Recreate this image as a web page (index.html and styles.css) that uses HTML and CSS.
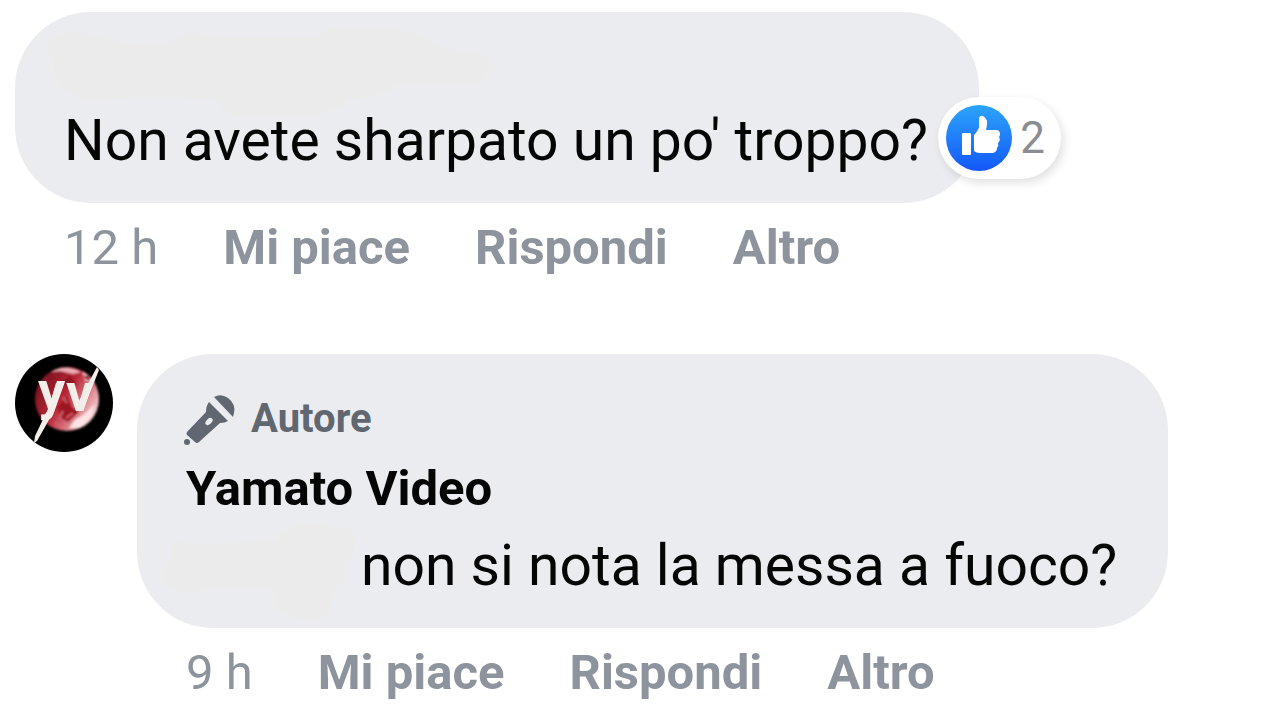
FILE: index.html
```
<!DOCTYPE html>
<html lang="it">
<head>
    <meta charset="utf-8">
    <meta name="viewport" content="width=device-width, initial-scale=1">
    <title>Commenti</title>
    <link rel="stylesheet" href="styles.css">
</head>
<body>
    <main class="comments">
        <article class="comment">
            <div class="bubble">
                <svg class="hidden-name" width="436" height="60" viewBox="0 0 436 60" aria-hidden="true">
                    <path d="M-15 5Q-2 -8 12 -6Q25 -4 38 1Q72 9 108 4Q115 -6 133 -5Q150 2 180 1H254Q263 -12 290 -11Q335 -10 360 0Q370 13 398 13Q422 14 425 27Q425 46 408 47Q365 46 332 48Q316 62 288 61Q270 78 230 80H185Q160 80 152 62Q100 58 35 62Q-10 63 -10 28Q-22 18 -15 5Z"/>
                </svg>
                <p class="text">Non avete sharpato un po' troppo?</p>
                <button type="button" class="reactions" aria-label="2 Mi piace">
                    <svg width="66" height="66" viewBox="0 0 66 66" aria-hidden="true">
                        <defs>
                            <linearGradient id="like" x1="0" y1="0" x2="0" y2="1">
                                <stop offset="0" stop-color="#2ca4fb"/>
                                <stop offset="1" stop-color="#1358f8"/>
                            </linearGradient>
                        </defs>
                        <circle cx="33" cy="33" r="33" fill="url(#like)"/>
                        <path fill="#fff" d="M17 28H24Q25 28 25 29V49Q25 50 24 50H17Q16 50 16 49V29Q16 28 17 28ZM28 30Q34 24 33 19V13Q34 10 37 11Q42 14 41 20L40 25H50Q54 25 54 29Q54 31 53 32Q55 35 52 38Q53 41 51 43Q51 47 47 48H34Q30 48 28 46Z"/>
                    </svg>
                    <span>2</span>
                </button>
            </div>
            <div class="actions">
                <span>12 h</span>
                <button type="button">Mi piace</button>
                <button type="button">Rispondi</button>
                <button type="button">Altro</button>
            </div>
        </article>

        <article class="comment reply">
            <svg class="avatar" viewBox="0 0 98 98" role="img" aria-label="Yamato Video">
                <defs>
                    <linearGradient id="moon" x1="0.05" y1="0.25" x2="0.9" y2="0.8">
                        <stop offset="0" stop-color="#7d1420"/>
                        <stop offset="0.45" stop-color="#b92737"/>
                        <stop offset="0.7" stop-color="#d5707a"/>
                        <stop offset="1" stop-color="#f6d3d5"/>
                    </linearGradient>
                    <filter id="soft" x="-20%" y="-20%" width="140%" height="140%">
                        <feGaussianBlur stdDeviation="1"/>
                    </filter>
                    <clipPath id="round"><circle cx="49" cy="49" r="49"/></clipPath>
                </defs>
                <g clip-path="url(#round)">
                    <rect width="98" height="98" fill="#000"/>
                    <g filter="url(#soft)">
                        <circle cx="52" cy="45" r="32" fill="url(#moon)"/>
                        <path d="M36 18Q50 9 66 18L58 20L45 17ZM67 17Q76 21 80 30L70 27Z" fill="#edabb2"/>
                        <path d="M43 53L52 42L57 53L64 58L53 68L45 63Z" fill="#9c1424"/>
                        <path d="M60 66Q72 60 79 50Q78 66 64 74L54 74Z" fill="#ffe3e4"/>
                        <path d="M46 28L55 22L61 29L54 35ZM32 26L38 21L42 25ZM68 23L74 21L75 27Z" fill="#8c1421"/>
                        <path d="M48 43L52 49M58 59L51 64M48 57L44 65M40 68L46 72" stroke="#d8606b" stroke-width="2"/>
                    </g>
                    <text class="avatar-letters" x="23" y="55">y</text>
                    <text class="avatar-letters" x="51" y="57">v</text>
                    <path d="M41 29H49L39 57L22 87L19 89L20 82L34 53ZM82 13L84 16L70 51L64 57L61 53L69 37Z" fill="#f4eeea"/>
                </g>
            </svg>
            <div class="reply-body">
                <div class="bubble">
                    <div class="badge">
                        <svg width="50" height="50" viewBox="0 1 50 50" aria-hidden="true">
                            <path d="M28 4Q35 0 42 5Q50 11 48 20L47 24Z"/>
                            <path fill-rule="evenodd" d="M23 9L42 28Q39 30 34 30L13 49Q11 51 9 49L1 42Q0 41 1 39L20 19Q20 13 23 9ZM20 28Q18 31 21 32Q23 33 26 29Q28 26 25 25Q23 24 20 28Z"/>
                            <circle cx="1" cy="49" r="3"/>
                        </svg>
                        <span>Autore</span>
                    </div>
                    <h2 class="author">Yamato Video</h2>
                    <div class="reply-text">
                        <svg class="hidden-tag" width="175" height="68" viewBox="0 0 175 68" aria-hidden="true">
                            <path d="M-14 10Q30 14 88 8Q100 -4 120 -10Q140 -12 145 -4H162Q171 0 169 12Q165 32 155 32Q162 46 154 54Q148 54 146 66Q145 85 130 87Q106 87 96 80Q90 72 92 58Q50 51 10 60Q-17 62 -22 44Q-20 30 -14 26Z"/>
                        </svg>
                        <p class="text">non si nota la messa a fuoco?</p>
                    </div>
                </div>
                <div class="actions">
                    <span>9 h</span>
                    <button type="button">Mi piace</button>
                    <button type="button">Rispondi</button>
                    <button type="button">Altro</button>
                </div>
            </div>
        </article>
    </main>
</body>
</html>
```
FILE: styles.css
```
* {
    margin: 0;
    padding: 0;
    box-sizing: border-box;
}
body {
    font-family: Roboto, sans-serif;
    background: #fff;
    color: #050505;
}
button {
    font: inherit;
    color: inherit;
    background: none;
    border: none;
    cursor: pointer;
}
.comments {
    display: flex;
    flex-direction: column;
    gap: 77px;
    padding: 12px 15px;
}
.bubble {
    position: relative;
    width: fit-content;
    padding: 25px 51px 28px 49px;
    background: #ebecf0;
    border-radius: 76px;
}
.hidden-name,
.hidden-tag {
    display: block;
    flex-shrink: 0;
    overflow: visible;
    fill: #ebebeb;
}
.hidden-name {
    margin-bottom: 10px;
}
.text {
    position: relative;
    font-size: 57px;
    line-height: 68px;
}
/* like counter, hangs over the right edge of the bubble */
.reactions {
    position: absolute;
    right: -82px;
    bottom: 24px;
    display: flex;
    align-items: center;
    gap: 8px;
    padding: 8px 16px 8px 8px;
    border-radius: 41px;
    background: #fff;
    box-shadow: 3px 4px 10px rgba(0, 0, 0, 0.12);
    color: #8a8d91;
    font-size: 44px;
    line-height: 66px;
}
.actions {
    display: flex;
    gap: 65px;
    margin-top: 16px;
    padding-left: 49px;
    color: #8d949e;
    font-size: 49px;
    line-height: 58px;
}
.actions button {
    font-weight: 700;
}
.reply {
    display: flex;
    align-items: flex-start;
    gap: 24px;
}
.reply .bubble {
    padding-top: 40px;
}
.avatar {
    flex-shrink: 0;
    width: 98px;
    height: 98px;
}
.avatar-letters {
    font-size: 54px;
    font-weight: 700;
    fill: #f4eeea;
}
.badge {
    display: flex;
    align-items: center;
    gap: 15px;
    color: #606770;
    font-size: 40px;
    font-weight: 700;
    line-height: 50px;
}
.badge svg {
    overflow: visible;
    fill: #606770;
}
.author {
    margin: 16px 0 14px;
    font-size: 49px;
    line-height: 58px;
}
.reply-text {
    display: flex;
}
```
